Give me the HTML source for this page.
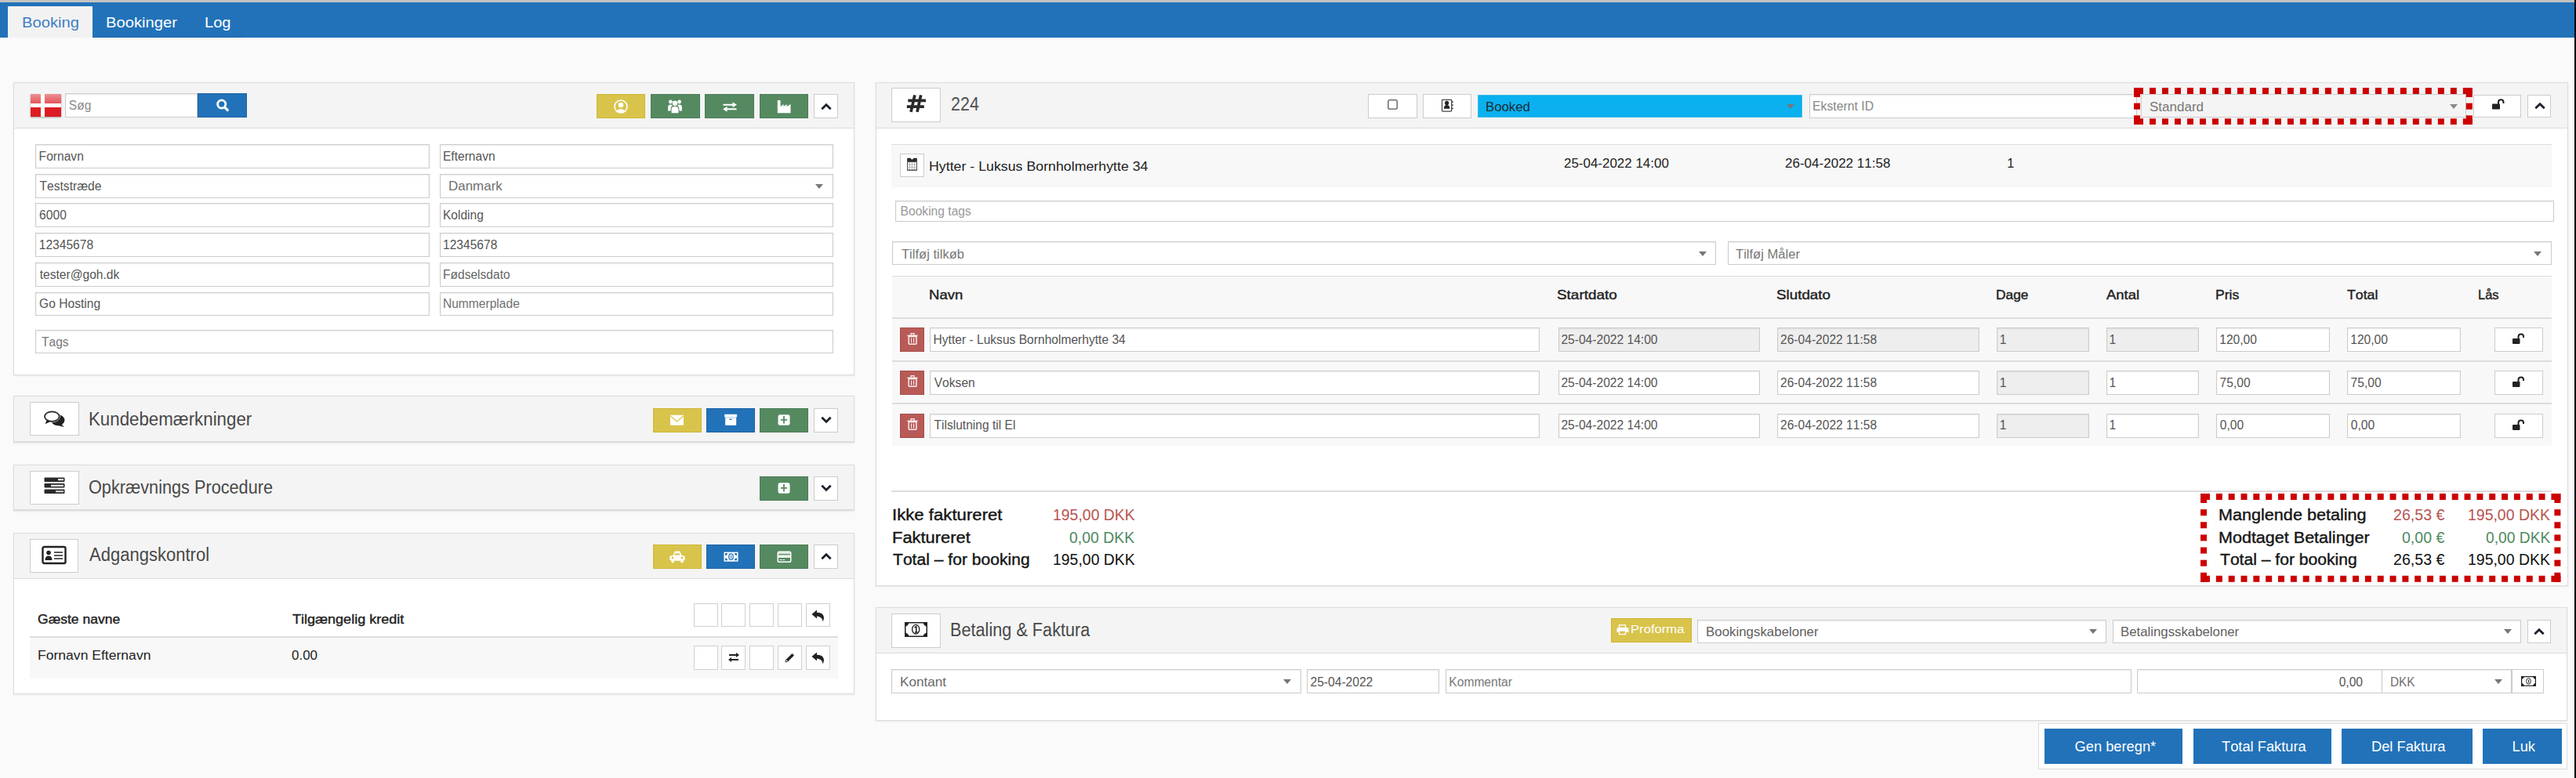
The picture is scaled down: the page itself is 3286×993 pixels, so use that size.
<!DOCTYPE html>
<html><head><meta charset="utf-8"><style>
html,body{margin:0;padding:0;}
body{width:3286px;height:993px;position:relative;overflow:hidden;background:#fafafa;font-family:"Liberation Sans",sans-serif;}
.a{position:absolute;box-sizing:border-box;}
.t{position:absolute;white-space:nowrap;line-height:1;font-kerning:none;}
.flag{background:linear-gradient(to right,transparent 0,transparent 13px,#fff 13px,#fff 18.4px,transparent 18.4px),linear-gradient(to bottom,transparent 0,transparent 11.7px,#fff 11.7px,#fff 17.1px,transparent 17.1px),linear-gradient(to bottom,#ee8f93 0,#e4565b 11.7px,#dc1c22 11.7px,#dc1c22 100%);box-shadow:0 1px 2px rgba(0,0,0,.35);}
</style></head><body>
<div class="a" style="left:0.0px;top:0.0px;width:3286.0px;height:3.0px;background:#c3c3c3;"></div>
<div class="a" style="left:0.0px;top:3.0px;width:3286.0px;height:45.0px;background:#2272b9;"></div>
<div class="a" style="left:10.4px;top:8.0px;width:107.4px;height:40.0px;background:#f2f2f2;"></div>
<div class="a" style="left:117.8px;top:46.8px;width:192.7px;height:1.2px;background:#1e65a8;"></div>
<div class="t" style="left:27.54px;top:21px;font-size:17.50px;color:#3f7dc4;transform:scaleX(1.1536);transform-origin:0 0;">Booking</div>
<div class="t" style="left:134.54px;top:21px;font-size:17.50px;color:#ffffff;transform:scaleX(1.1547);transform-origin:0 0;">Bookinger</div>
<div class="t" style="left:260.66px;top:21px;font-size:17.50px;color:#ffffff;transform:scaleX(1.1451);transform-origin:0 0;">Log</div>
<div class="a" style="left:17.0px;top:104.6px;width:1073.0px;height:374.9px;background:#ffffff;border:1px solid #dcdcdc;box-shadow:0 1px 2px rgba(0,0,0,.08);"></div>
<div class="a" style="left:17.0px;top:104.6px;width:1073.0px;height:59.2px;background:#f4f4f4;border:1px solid #dcdcdc;"></div>
<div class="a flag" style="left:39px;top:120px;width:39px;height:29px"></div>
<div class="a" style="left:82.6px;top:118.8px;width:169.9px;height:30.8px;background:#fff;border:1px solid #cccccc;box-shadow:inset 0 1px 2px rgba(0,0,0,.08);"></div>
<div class="t" style="left:87.79px;top:127px;font-size:15.60px;color:#8a8a8a;">Søg</div>
<div class="a" style="left:252.0px;top:118.8px;width:62.7px;height:30.9px;background:#2272b9;border:1px solid #1d62a3;"></div>
<svg class="a" style="left:274.0px;top:124.0px" width="20" height="20" viewBox="0 0 20 20"><circle cx="8.7" cy="9" r="5.1" fill="none" stroke="#fff" stroke-width="2.8"/><path d="M12.6 12.9 L16.2 16.5" stroke="#fff" stroke-width="3.2" stroke-linecap="round"/></svg>
<div class="a" style="left:761.0px;top:120.0px;width:62.3px;height:31.0px;background:#d9c44b;border:1px solid #cdb535;"></div>
<svg class="a" style="left:782.1px;top:125.5px" width="20" height="20" viewBox="0 0 20 20"><circle cx="10" cy="10" r="8" fill="none" stroke="#fff" stroke-width="1.6"/><circle cx="10" cy="8" r="3.3" fill="#fff"/><path d="M4.5 15.5 Q10 10.5 15.5 15.5 L14 17 Q10 19 6 17 Z" fill="#fff"/></svg>
<div class="a" style="left:830.0px;top:120.0px;width:62.7px;height:31.0px;background:#558a61;border:1px solid #4b7b56;"></div>
<svg class="a" style="left:851.4px;top:125.5px" width="20" height="20" viewBox="0 0 20 20"><circle cx="10" cy="5.8" r="3.2" fill="#fff"/><circle cx="4.4" cy="4" r="2.4" fill="#fff"/><circle cx="15.6" cy="4" r="2.4" fill="#fff"/><path d="M5.6 18.2 L5.6 13.5 Q5.6 9.8 10 9.8 Q14.4 9.8 14.4 13.5 L14.4 18.2 Z" fill="#fff"/><path d="M1.1 15.5 L1.1 11 Q1.1 7.6 4.4 7.6 Q6 7.6 6.8 8.5 Q4.6 10 4.6 13 L4.6 15.5 Z M18.9 15.5 L18.9 11 Q18.9 7.6 15.6 7.6 Q14 7.6 13.2 8.5 Q15.4 10 15.4 13 L15.4 15.5 Z" fill="#fff"/></svg>
<div class="a" style="left:899.3px;top:120.0px;width:62.7px;height:31.0px;background:#558a61;border:1px solid #4b7b56;"></div>
<svg class="a" style="left:920.6px;top:125.5px" width="20" height="20" viewBox="0 0 20 20"><path d="M1.5 7.8 L14.5 7.8 M5.5 13.2 L18.5 13.2" stroke="#fff" stroke-width="2"/><path d="M13.5 4.3 L18.9 7.8 L13.5 11.3 Z M6.5 9.7 L1.1 13.2 L6.5 16.7 Z" fill="#fff"/></svg>
<div class="a" style="left:968.7px;top:120.0px;width:62.3px;height:31.0px;background:#558a61;border:1px solid #4b7b56;"></div>
<svg class="a" style="left:989.9px;top:125.5px" width="20" height="20" viewBox="0 0 20 20"><path d="M1.8 2 L5.6 2 L5.6 10 L9.6 7 L9.6 10 L13.6 7 L13.6 10 L18.5 7 L18.5 18.2 L1.8 18.2 Z" fill="#fff"/></svg>
<div class="a" style="left:1038.0px;top:120.3px;width:30.8px;height:30.7px;background:#fff;border:1px solid #cccccc;"></div>
<svg class="a" style="left:1045.5px;top:128.5px" width="16" height="14" viewBox="0 0 16 14"><path d="M2.3 10.2 L8 4.7 L13.7 10.2" fill="none" stroke="#1c212b" stroke-width="2.8" stroke-linecap="butt" stroke-linejoin="miter"/></svg>
<div class="a" style="left:44.5px;top:184.3px;width:503.2px;height:30.5px;background:#fff;border:1px solid #cccccc;box-shadow:inset 0 1px 2px rgba(0,0,0,.08);"></div>
<div class="a" style="left:561.0px;top:184.3px;width:501.6px;height:30.5px;background:#fff;border:1px solid #cccccc;box-shadow:inset 0 1px 2px rgba(0,0,0,.08);"></div>
<div class="t" style="left:49.62px;top:192px;font-size:15.60px;color:#555;">Fornavn</div>
<div class="t" style="left:564.92px;top:192px;font-size:15.60px;color:#555;">Efternavn</div>
<div class="a" style="left:44.5px;top:222.1px;width:503.2px;height:30.5px;background:#fff;border:1px solid #cccccc;box-shadow:inset 0 1px 2px rgba(0,0,0,.08);"></div>
<div class="a" style="left:561.0px;top:222.1px;width:501.6px;height:30.5px;background:#fff;border:1px solid #cccccc;box-shadow:inset 0 1px 2px rgba(0,0,0,.08);"></div>
<div class="t" style="left:50.55px;top:230px;font-size:15.60px;color:#555;">Teststræde</div>
<div class="t" style="left:571.61px;top:229px;font-size:16.20px;color:#6e6e6e;transform:scaleX(1.0479);transform-origin:0 0;">Danmark</div>
<svg class="a" style="left:1039.0px;top:233.6px" width="12" height="8" viewBox="0 0 12 8"><path d="M1 1 L11 1 L6 7 Z" fill="#777"/></svg>
<div class="a" style="left:44.5px;top:259.3px;width:503.2px;height:30.5px;background:#fff;border:1px solid #cccccc;box-shadow:inset 0 1px 2px rgba(0,0,0,.08);"></div>
<div class="a" style="left:561.0px;top:259.3px;width:501.6px;height:30.5px;background:#fff;border:1px solid #cccccc;box-shadow:inset 0 1px 2px rgba(0,0,0,.08);"></div>
<div class="t" style="left:50.11px;top:267px;font-size:15.60px;color:#555;">6000</div>
<div class="t" style="left:564.92px;top:267px;font-size:15.60px;color:#555;">Kolding</div>
<div class="a" style="left:44.5px;top:297.2px;width:503.2px;height:30.5px;background:#fff;border:1px solid #cccccc;box-shadow:inset 0 1px 2px rgba(0,0,0,.08);"></div>
<div class="a" style="left:561.0px;top:297.2px;width:501.6px;height:30.5px;background:#fff;border:1px solid #cccccc;box-shadow:inset 0 1px 2px rgba(0,0,0,.08);"></div>
<div class="t" style="left:49.71px;top:305px;font-size:15.60px;color:#555;">12345678</div>
<div class="t" style="left:565.01px;top:305px;font-size:15.60px;color:#555;">12345678</div>
<div class="a" style="left:44.5px;top:335.1px;width:503.2px;height:30.5px;background:#fff;border:1px solid #cccccc;box-shadow:inset 0 1px 2px rgba(0,0,0,.08);"></div>
<div class="a" style="left:561.0px;top:335.1px;width:501.6px;height:30.5px;background:#fff;border:1px solid #cccccc;box-shadow:inset 0 1px 2px rgba(0,0,0,.08);"></div>
<div class="t" style="left:50.66px;top:343px;font-size:15.60px;color:#555;">tester@goh.dk</div>
<div class="t" style="left:564.92px;top:343px;font-size:15.60px;color:#666;">Fødselsdato</div>
<div class="a" style="left:44.5px;top:372.8px;width:503.2px;height:30.5px;background:#fff;border:1px solid #cccccc;box-shadow:inset 0 1px 2px rgba(0,0,0,.08);"></div>
<div class="a" style="left:561.0px;top:372.8px;width:501.6px;height:30.5px;background:#fff;border:1px solid #cccccc;box-shadow:inset 0 1px 2px rgba(0,0,0,.08);"></div>
<div class="t" style="left:50.12px;top:380px;font-size:15.60px;color:#555;">Go Hosting</div>
<div class="t" style="left:564.92px;top:380px;font-size:15.60px;color:#707070;">Nummerplade</div>
<div class="a" style="left:44.7px;top:421.2px;width:1017.9px;height:30.2px;background:#fff;border:1px solid #cccccc;box-shadow:inset 0 1px 2px rgba(0,0,0,.08);"></div>
<div class="t" style="left:52.95px;top:429px;font-size:15.60px;color:#777;">Tags</div>
<div class="a" style="left:17.0px;top:505.2px;width:1073.0px;height:59.8px;background:#f4f4f4;border:1px solid #dcdcdc;border-bottom-width:2px;box-shadow:0 1px 2px rgba(0,0,0,.08);"></div>
<div class="a" style="left:38.2px;top:512.7px;width:62.4px;height:43.2px;background:#fff;border:1px solid #cccccc;"></div>
<div class="t" style="left:112.67px;top:524px;font-size:23.00px;color:#484848;transform:scaleX(0.9693);transform-origin:0 0;">Kundebemærkninger</div>
<div class="a" style="left:832.8px;top:520.8px;width:62.6px;height:30.9px;background:#d9c44b;border:1px solid #cdb535;"></div>
<svg class="a" style="left:854.1px;top:526.2px" width="20" height="20" viewBox="0 0 20 20"><rect x="1" y="3.75" width="17" height="13.1" rx="1" fill="#fff"/><path d="M1.5 5 L9.5 12 L17.5 5" fill="none" stroke="#d9c44b" stroke-width="1.2"/></svg>
<div class="a" style="left:900.5px;top:520.8px;width:62.7px;height:30.9px;background:#2272b9;border:1px solid #1d62a3;"></div>
<svg class="a" style="left:921.9px;top:526.2px" width="20" height="20" viewBox="0 0 20 20"><rect x="2.15" y="2.75" width="16" height="3.9" rx="0.8" fill="#fff"/><rect x="3.15" y="7.15" width="14" height="9.7" fill="#fff"/><rect x="8.4" y="8.6" width="3.2" height="1.4" fill="#2272b9"/></svg>
<div class="a" style="left:968.6px;top:520.8px;width:62.7px;height:30.9px;background:#558a61;border:1px solid #4b7b56;"></div>
<svg class="a" style="left:990.0px;top:526.2px" width="20" height="20" viewBox="0 0 20 20"><rect x="2.55" y="3.25" width="15" height="13.6" rx="2.5" fill="#fff"/><path d="M10 5.1 L10 14.4 M5.9 9.9 L14.1 9.9" stroke="#558a61" stroke-width="1.8"/></svg>
<div class="a" style="left:1038.0px;top:520.8px;width:30.9px;height:30.9px;background:#fff;border:1px solid #cccccc;"></div>
<svg class="a" style="left:1045.5px;top:529.0px" width="16" height="14" viewBox="0 0 16 14"><path d="M2.3 3.8 L8 9.3 L13.7 3.8" fill="none" stroke="#1c212b" stroke-width="2.8" stroke-linecap="butt" stroke-linejoin="miter"/></svg>
<svg class="a" style="left:50.0px;top:520.0px" width="36" height="28" viewBox="0 0 36 28"><ellipse cx="23.8" cy="16.2" rx="8.6" ry="7" fill="#222"/><path d="M27 20 L31.8 25 L21.5 22.5 Z" fill="#222"/><ellipse cx="16.3" cy="11.6" rx="10.6" ry="7.6" fill="#fff"/><ellipse cx="16.3" cy="11.6" rx="9.3" ry="6.3" fill="#fff" stroke="#222" stroke-width="1.7"/><path d="M9.5 16.6 L7.6 21.2 L14.5 17.9 Z" fill="#222"/></svg>
<div class="a" style="left:17.0px;top:593.0px;width:1073.0px;height:59.0px;background:#f4f4f4;border:1px solid #dcdcdc;border-bottom-width:2px;box-shadow:0 1px 2px rgba(0,0,0,.08);"></div>
<div class="a" style="left:38.2px;top:600.5px;width:62.4px;height:43.2px;background:#fff;border:1px solid #cccccc;"></div>
<div class="t" style="left:113.47px;top:611px;font-size:23.00px;color:#484848;transform:scaleX(0.9427);transform-origin:0 0;">Opkrævnings Procedure</div>
<div class="a" style="left:968.6px;top:607.9px;width:62.7px;height:30.8px;background:#558a61;border:1px solid #4b7b56;"></div>
<svg class="a" style="left:990.0px;top:613.3px" width="20" height="20" viewBox="0 0 20 20"><rect x="2.55" y="3.25" width="15" height="13.6" rx="2.5" fill="#fff"/><path d="M10 5.1 L10 14.4 M5.9 9.9 L14.1 9.9" stroke="#558a61" stroke-width="1.8"/></svg>
<div class="a" style="left:1038.0px;top:607.9px;width:30.9px;height:30.8px;background:#fff;border:1px solid #cccccc;"></div>
<svg class="a" style="left:1045.5px;top:616.1px" width="16" height="14" viewBox="0 0 16 14"><path d="M2.3 3.8 L8 9.3 L13.7 3.8" fill="none" stroke="#1c212b" stroke-width="2.8" stroke-linecap="butt" stroke-linejoin="miter"/></svg>
<svg class="a" style="left:56.0px;top:609.0px" width="27" height="22" viewBox="0 0 27 22"><rect x="0.5" y="0.5" width="26" height="5.5" rx="1" fill="#2a2a2a"/><rect x="0.5" y="8" width="26" height="5.5" rx="1" fill="#2a2a2a"/><rect x="0.5" y="15.5" width="26" height="5.5" rx="1" fill="#2a2a2a"/><rect x="18" y="2.2" width="7" height="2" fill="#fff"/><rect x="9" y="9.8" width="16" height="2" fill="#fff"/><rect x="15" y="17.3" width="10" height="2" fill="#ddd"/></svg>
<div class="a" style="left:17.0px;top:680.3px;width:1073.0px;height:205.7px;background:#fff;border:1px solid #dcdcdc;box-shadow:0 1px 2px rgba(0,0,0,.08);"></div>
<div class="a" style="left:17.0px;top:680.3px;width:1073.0px;height:58.7px;background:#f4f4f4;border:1px solid #dcdcdc;"></div>
<div class="a" style="left:38.1px;top:687.8px;width:62.4px;height:43.4px;background:#fff;border:1px solid #cccccc;"></div>
<div class="t" style="left:114.16px;top:697px;font-size:23.00px;color:#484848;transform:scaleX(0.9574);transform-origin:0 0;">Adgangskontrol</div>
<svg class="a" style="left:53.0px;top:696.0px" width="33" height="26" viewBox="0 0 33 26"><rect x="1.5" y="2" width="29" height="21" rx="2" fill="none" stroke="#222" stroke-width="2.4"/><circle cx="9" cy="9.5" r="2.8" fill="#222"/><path d="M4.5 19 Q4.5 13.5 9 13.5 Q13.5 13.5 13.5 19 Z" fill="#222"/><path d="M16 9 L27 9 M16 13 L27 13 M16 17 L27 17" stroke="#222" stroke-width="1.6"/></svg>
<div class="a" style="left:832.8px;top:695.0px;width:62.6px;height:31.0px;background:#d9c44b;border:1px solid #cdb535;"></div>
<svg class="a" style="left:853.5px;top:703.0px" width="20" height="16" viewBox="0 0 20 16"><path d="M4.3 6.2 L6.2 1.8 Q6.8 0.6 8 0.6 L12 0.6 Q13.2 0.6 13.8 1.8 L15.7 6.2 Z" fill="#fff"/><rect x="0.3" y="6" width="19.4" height="6.8" rx="2.5" fill="#fff"/><rect x="6.5" y="3.4" width="6.6" height="2.1" fill="#d9c44b"/><circle cx="4" cy="9" r="1.4" fill="#d9c44b"/><circle cx="16" cy="9" r="1.4" fill="#d9c44b"/><rect x="2.5" y="12" width="3.2" height="3.3" rx="1" fill="#fff"/><rect x="14.3" y="12" width="3.2" height="3.3" rx="1" fill="#fff"/></svg>
<div class="a" style="left:900.5px;top:695.0px;width:62.7px;height:31.0px;background:#2272b9;border:1px solid #1d62a3;"></div>
<svg class="a" style="left:922.5px;top:703.5px" width="19" height="14" viewBox="0 0 19 14"><rect x="0.5" y="0.6" width="18" height="12.1" fill="#fff"/><path d="M2 2.1 L5 2.1 A3 3 0 0 1 2 5.1 Z M17 2.1 L14 2.1 A3 3 0 0 0 17 5.1 Z M2 11.2 L5 11.2 A3 3 0 0 0 2 8.2 Z M17 11.2 L14 11.2 A3 3 0 0 1 17 8.2 Z" fill="#2272b9"/><ellipse cx="9.5" cy="6.65" rx="2.7" ry="3.7" fill="none" stroke="#2272b9" stroke-width="1.3"/><path d="M9.6 4.8 L9.6 8.6" stroke="#2272b9" stroke-width="1"/></svg>
<div class="a" style="left:968.6px;top:695.0px;width:62.7px;height:31.0px;background:#558a61;border:1px solid #4b7b56;"></div>
<svg class="a" style="left:990.5px;top:702.5px" width="19" height="16" viewBox="0 0 19 16"><rect x="1.25" y="1.25" width="16.5" height="13.1" rx="1.8" fill="none" stroke="#fff" stroke-width="1.5"/><rect x="2" y="2" width="15" height="2.2" fill="#d6e2d6"/><rect x="1.25" y="5.5" width="16.5" height="3.3" fill="#fff"/><rect x="3.5" y="11" width="3" height="1" fill="#fff"/><rect x="7.5" y="11" width="2.5" height="1" fill="#fff"/></svg>
<div class="a" style="left:1038.0px;top:695.0px;width:30.9px;height:31.0px;background:#fff;border:1px solid #cccccc;"></div>
<svg class="a" style="left:1045.5px;top:703.3px" width="16" height="14" viewBox="0 0 16 14"><path d="M2.3 10.2 L8 4.7 L13.7 10.2" fill="none" stroke="#1c212b" stroke-width="2.8" stroke-linecap="butt" stroke-linejoin="miter"/></svg>
<div class="t" style="left:48.32px;top:782px;font-size:17.00px;color:#222;-webkit-text-stroke:0.4px #222;transform:scaleX(1.0314);transform-origin:0 0;">Gæste navne</div>
<div class="t" style="left:372.60px;top:782px;font-size:17.00px;color:#222;-webkit-text-stroke:0.4px #222;transform:scaleX(1.0601);transform-origin:0 0;">Tilgængelig kredit</div>
<div class="a" style="left:885.3px;top:769.7px;width:31.0px;height:30.8px;background:#fff;border:1px solid #d0d0d0;"></div>
<div class="a" style="left:920.4px;top:769.7px;width:31.0px;height:30.8px;background:#fff;border:1px solid #d0d0d0;"></div>
<div class="a" style="left:955.8px;top:769.7px;width:31.0px;height:30.8px;background:#fff;border:1px solid #d0d0d0;"></div>
<div class="a" style="left:992.4px;top:769.7px;width:31.0px;height:30.8px;background:#fff;border:1px solid #d0d0d0;"></div>
<div class="a" style="left:1027.7px;top:769.7px;width:31.0px;height:30.8px;background:#fff;border:1px solid #d0d0d0;"></div>
<div class="a" style="left:37.8px;top:811.5px;width:1031.2px;height:2.0px;background:#dddddd;"></div>
<div class="a" style="left:37.8px;top:813.5px;width:1031.2px;height:52.0px;background:#f8f8f8;"></div>
<div class="t" style="left:47.76px;top:829px;font-size:16.80px;color:#222;transform:scaleX(1.0461);transform-origin:0 0;">Fornavn Efternavn</div>
<div class="t" style="left:372.34px;top:829px;font-size:16.80px;color:#222;transform:scaleX(1.0100);transform-origin:0 0;">0.00</div>
<div class="a" style="left:885.3px;top:824.2px;width:31.0px;height:30.8px;background:#fff;border:1px solid #d0d0d0;"></div>
<div class="a" style="left:920.4px;top:824.2px;width:31.0px;height:30.8px;background:#fff;border:1px solid #d0d0d0;"></div>
<div class="a" style="left:955.8px;top:824.2px;width:31.0px;height:30.8px;background:#fff;border:1px solid #d0d0d0;"></div>
<div class="a" style="left:992.4px;top:824.2px;width:31.0px;height:30.8px;background:#fff;border:1px solid #d0d0d0;"></div>
<div class="a" style="left:1027.7px;top:824.2px;width:31.0px;height:30.8px;background:#fff;border:1px solid #d0d0d0;"></div>
<svg class="a" style="left:1034.0px;top:777.0px" width="18" height="18" viewBox="0 0 18 18"><path d="M1.5 7 L8 1.5 L8 4.8 Q16 4.5 17 11 Q17 14 15.5 16.5 Q15 10 8 9.5 L8 12.5 Z" fill="#222"/></svg>
<svg class="a" style="left:1034.0px;top:831.0px" width="18" height="18" viewBox="0 0 18 18"><path d="M1.5 7 L8 1.5 L8 4.8 Q16 4.5 17 11 Q17 14 15.5 16.5 Q15 10 8 9.5 L8 12.5 Z" fill="#222"/></svg>
<svg class="a" style="left:928.0px;top:831.0px" width="16" height="16" viewBox="0 0 16 16"><path d="M2 5 L13 5 M3 11 L14 11" stroke="#222" stroke-width="1.8"/><path d="M11 2 L15 5 L11 8 Z M5 8 L1 11 L5 14 Z" fill="#222"/></svg>
<svg class="a" style="left:999.0px;top:832.0px" width="16" height="16" viewBox="0 0 16 16"><path d="M3 13 L4 9.5 L11.5 2 L14 4.5 L6.5 12 Z" fill="#222"/><path d="M3 13 L4 9.5 L6.5 12 Z" fill="#fff" stroke="#222" stroke-width="0.8"/></svg>
<div class="a" style="left:1117.0px;top:104.7px;width:2158.5px;height:643.5px;background:#fff;border:1px solid #dcdcdc;box-shadow:0 1px 2px rgba(0,0,0,.08);"></div>
<div class="a" style="left:1117.0px;top:104.7px;width:2158.5px;height:59.1px;background:#f4f4f4;border:1px solid #dcdcdc;"></div>
<div class="a" style="left:1137.3px;top:112.4px;width:62.4px;height:43.5px;background:#fff;border:1px solid #cccccc;"></div>
<svg class="a" style="left:1155.0px;top:120.0px" width="28" height="25" viewBox="0 0 28 25"><path d="M11.9 1.3 L7 22.9 M19.7 1.3 L15 22.9 M3.3 8.3 L26.1 8.3 M1.8 16.2 L23.8 16.2" stroke="#2a2a2a" stroke-width="3.7"/></svg>
<div class="t" style="left:1212.92px;top:122px;font-size:23.00px;color:#505050;transform:scaleX(0.9359);transform-origin:0 0;">224</div>
<div class="a" style="left:1745.4px;top:120.3px;width:62.2px;height:30.3px;background:#fff;border:1px solid #cccccc;"></div>
<svg class="a" style="left:1769.0px;top:126.0px" width="15" height="15" viewBox="0 0 15 15"><rect x="1.8" y="1.7" width="11.4" height="11.5" rx="1.8" fill="none" stroke="#555" stroke-width="1.3"/></svg>
<div class="a" style="left:1814.6px;top:120.3px;width:62.0px;height:30.3px;background:#fff;border:1px solid #cccccc;"></div>
<svg class="a" style="left:1837.5px;top:125.5px" width="17" height="17" viewBox="0 0 17 17"><rect x="1.5" y="1.3" width="12.2" height="14.8" rx="0.8" fill="none" stroke="#444" stroke-width="1.2"/><circle cx="7.6" cy="5.4" r="2.6" fill="#222"/><path d="M3.8 12.7 Q3.8 7.9 7.6 7.9 Q11.4 7.9 11.4 12.7 Z" fill="#222"/><rect x="14" y="3.2" width="1.6" height="1.6" fill="#333"/><rect x="14" y="7.4" width="1.6" height="1.6" fill="#333"/><rect x="14" y="11.6" width="1.6" height="1.6" fill="#333"/></svg>
<div class="a" style="left:1884.5px;top:121.0px;width:414.9px;height:29.1px;background:#0ab1ee;border:1px solid #3fb9e8;"></div>
<div class="t" style="left:1895.42px;top:128px;font-size:16.50px;color:#1b2b33;transform:scaleX(1.0160);transform-origin:0 0;">Booked</div>
<svg class="a" style="left:2277.5px;top:132.0px" width="12" height="8" viewBox="0 0 12 8"><path d="M1 1 L11 1 L6 7 Z" fill="#777"/></svg>
<div class="a" style="left:2307.5px;top:119.6px;width:418.5px;height:31.0px;background:#fff;border:1px solid #cccccc;box-shadow:inset 0 1px 2px rgba(0,0,0,.08);"></div>
<div class="t" style="left:2312.00px;top:127px;font-size:16.40px;color:#888;transform:scaleX(0.9635);transform-origin:0 0;">Eksternt ID</div>
<div class="a" style="left:2731.4px;top:120.3px;width:414.9px;height:30.0px;background:#f4f4f4;border:1px solid #cccccc;"></div>
<div class="t" style="left:2742.43px;top:129px;font-size:16.80px;color:#777;transform:scaleX(1.0130);transform-origin:0 0;">Standard</div>
<svg class="a" style="left:3124.0px;top:132.0px" width="12" height="8" viewBox="0 0 12 8"><path d="M1 1 L11 1 L6 7 Z" fill="#888"/></svg>
<div class="a" style="left:3155.0px;top:120.7px;width:61.4px;height:29.6px;background:#fff;border:1px solid #cccccc;"></div>
<svg class="a" style="left:3178.0px;top:126.0px" width="17" height="15" viewBox="0 0 17 15"><rect x="1" y="6.5" width="10" height="7" rx="0.8" fill="#222"/><path d="M9 7 L9 4.5 Q9 1.3 12.3 1.3 Q15.5 1.3 15.5 4.5 L15.5 6" fill="none" stroke="#222" stroke-width="2"/></svg>
<div class="a" style="left:3224.3px;top:120.7px;width:30.1px;height:29.6px;background:#fff;border:1px solid #cccccc;"></div>
<svg class="a" style="left:3231.5px;top:128.3px" width="16" height="14" viewBox="0 0 16 14"><path d="M2.3 10.2 L8 4.7 L13.7 10.2" fill="none" stroke="#1c212b" stroke-width="2.8" stroke-linecap="butt" stroke-linejoin="miter"/></svg>
<svg class="a" style="left:2722.00px;top:112.10px" width="431.80" height="47.30" fill="#cc0000"><rect x="0.00" y="0.00" width="12.00" height="8.00"/><rect x="0.00" y="0.00" width="8.00" height="12.00"/><rect x="419.80" y="0.00" width="12.00" height="8.00"/><rect x="423.80" y="0.00" width="8.00" height="12.00"/><rect x="0.00" y="39.30" width="12.00" height="8.00"/><rect x="0.00" y="35.30" width="8.00" height="12.00"/><rect x="419.80" y="39.30" width="12.00" height="8.00"/><rect x="423.80" y="35.30" width="8.00" height="12.00"/><rect x="19.99" y="0.00" width="8.00" height="8.00"/><rect x="19.99" y="39.30" width="8.00" height="8.00"/><rect x="35.98" y="0.00" width="8.00" height="8.00"/><rect x="35.98" y="39.30" width="8.00" height="8.00"/><rect x="51.98" y="0.00" width="8.00" height="8.00"/><rect x="51.98" y="39.30" width="8.00" height="8.00"/><rect x="67.97" y="0.00" width="8.00" height="8.00"/><rect x="67.97" y="39.30" width="8.00" height="8.00"/><rect x="83.96" y="0.00" width="8.00" height="8.00"/><rect x="83.96" y="39.30" width="8.00" height="8.00"/><rect x="99.95" y="0.00" width="8.00" height="8.00"/><rect x="99.95" y="39.30" width="8.00" height="8.00"/><rect x="115.95" y="0.00" width="8.00" height="8.00"/><rect x="115.95" y="39.30" width="8.00" height="8.00"/><rect x="131.94" y="0.00" width="8.00" height="8.00"/><rect x="131.94" y="39.30" width="8.00" height="8.00"/><rect x="147.93" y="0.00" width="8.00" height="8.00"/><rect x="147.93" y="39.30" width="8.00" height="8.00"/><rect x="163.92" y="0.00" width="8.00" height="8.00"/><rect x="163.92" y="39.30" width="8.00" height="8.00"/><rect x="179.92" y="0.00" width="8.00" height="8.00"/><rect x="179.92" y="39.30" width="8.00" height="8.00"/><rect x="195.91" y="0.00" width="8.00" height="8.00"/><rect x="195.91" y="39.30" width="8.00" height="8.00"/><rect x="211.90" y="0.00" width="8.00" height="8.00"/><rect x="211.90" y="39.30" width="8.00" height="8.00"/><rect x="227.89" y="0.00" width="8.00" height="8.00"/><rect x="227.89" y="39.30" width="8.00" height="8.00"/><rect x="243.88" y="0.00" width="8.00" height="8.00"/><rect x="243.88" y="39.30" width="8.00" height="8.00"/><rect x="259.88" y="0.00" width="8.00" height="8.00"/><rect x="259.88" y="39.30" width="8.00" height="8.00"/><rect x="275.87" y="0.00" width="8.00" height="8.00"/><rect x="275.87" y="39.30" width="8.00" height="8.00"/><rect x="291.86" y="0.00" width="8.00" height="8.00"/><rect x="291.86" y="39.30" width="8.00" height="8.00"/><rect x="307.85" y="0.00" width="8.00" height="8.00"/><rect x="307.85" y="39.30" width="8.00" height="8.00"/><rect x="323.85" y="0.00" width="8.00" height="8.00"/><rect x="323.85" y="39.30" width="8.00" height="8.00"/><rect x="339.84" y="0.00" width="8.00" height="8.00"/><rect x="339.84" y="39.30" width="8.00" height="8.00"/><rect x="355.83" y="0.00" width="8.00" height="8.00"/><rect x="355.83" y="39.30" width="8.00" height="8.00"/><rect x="371.82" y="0.00" width="8.00" height="8.00"/><rect x="371.82" y="39.30" width="8.00" height="8.00"/><rect x="387.82" y="0.00" width="8.00" height="8.00"/><rect x="387.82" y="39.30" width="8.00" height="8.00"/><rect x="403.81" y="0.00" width="8.00" height="8.00"/><rect x="403.81" y="39.30" width="8.00" height="8.00"/><rect x="0.00" y="19.65" width="8.00" height="8.00"/><rect x="423.80" y="19.65" width="8.00" height="8.00"/></svg>
<div class="a" style="left:1137.3px;top:184.3px;width:2117.7px;height:55.2px;background:#f8f8f8;border-top:1px solid #dddddd;"></div>
<div class="a" style="left:1148.0px;top:196.0px;width:30.7px;height:30.4px;background:#fff;border:1px solid #cccccc;"></div>
<svg class="a" style="left:1156.0px;top:201.0px" width="15" height="18" viewBox="0 0 15 18"><path d="M1.2 0.8 L6 0.8 L6 2.2 L9 2.2 L9 0.8 L13.8 0.8 L13.8 5.6 L1.2 5.6 Z" fill="#2a2a2a"/><rect x="1.6" y="5.6" width="11.8" height="10.6" fill="#fff" stroke="#333" stroke-width="0.9"/><path d="M1.6 9.2 L13.4 9.2 M1.6 12.4 L13.4 12.4 M4.5 5.6 L4.5 16.2 M7.5 5.6 L7.5 16.2 M10.5 5.6 L10.5 16.2" stroke="#aaa" stroke-width="0.8"/><path d="M1.2 16.2 L13.8 16.2" stroke="#555" stroke-width="1.2"/></svg>
<div class="t" style="left:1185.14px;top:204px;font-size:17.00px;color:#222;transform:scaleX(1.0452);transform-origin:0 0;">Hytter - Luksus Bornholmerhytte 34</div>
<div class="t" style="left:1994.95px;top:200px;font-size:16.40px;color:#222;transform:scaleX(1.0342);transform-origin:0 0;">25-04-2022 14:00</div>
<div class="t" style="left:2277.04px;top:200px;font-size:16.40px;color:#222;transform:scaleX(1.0387);transform-origin:0 0;">26-04-2022 11:58</div>
<div class="t" style="left:2560.15px;top:200px;font-size:16.40px;color:#222;">1</div>
<div class="a" style="left:1141.6px;top:256.0px;width:2116.4px;height:27.3px;background:#fff;border:1px solid #cccccc;box-shadow:inset 0 1px 2px rgba(0,0,0,.08);"></div>
<div class="t" style="left:1148.62px;top:262px;font-size:15.60px;color:#999;">Booking tags</div>
<div class="a" style="left:1137.6px;top:307.8px;width:1051.6px;height:30.7px;background:#fff;border:1px solid #cccccc;box-shadow:inset 0 1px 2px rgba(0,0,0,.08);"></div>
<div class="t" style="left:1149.53px;top:317px;font-size:15.60px;color:#777;transform:scaleX(1.0620);transform-origin:0 0;">Tilføj tilkøb</div>
<svg class="a" style="left:2166.0px;top:319.5px" width="12" height="8" viewBox="0 0 12 8"><path d="M1 1 L11 1 L6 7 Z" fill="#777"/></svg>
<div class="a" style="left:2203.5px;top:307.8px;width:1051.2px;height:30.7px;background:#fff;border:1px solid #cccccc;box-shadow:inset 0 1px 2px rgba(0,0,0,.08);"></div>
<div class="t" style="left:2214.33px;top:317px;font-size:16.00px;color:#777;transform:scaleX(1.0371);transform-origin:0 0;">Tilføj Måler</div>
<svg class="a" style="left:3231.4px;top:319.5px" width="12" height="8" viewBox="0 0 12 8"><path d="M1 1 L11 1 L6 7 Z" fill="#777"/></svg>
<div class="a" style="left:1137.6px;top:352.3px;width:2117.1px;height:54.7px;background:#f8f8f8;border-top:1px solid #dddddd;border-bottom:2px solid #dddddd;"></div>
<div class="t" style="left:1185.08px;top:369px;font-size:16.60px;color:#222;-webkit-text-stroke:0.4px #222;transform:scaleX(1.1181);transform-origin:0 0;">Navn</div>
<div class="t" style="left:1986.34px;top:369px;font-size:16.60px;color:#222;-webkit-text-stroke:0.4px #222;transform:scaleX(1.1394);transform-origin:0 0;">Startdato</div>
<div class="t" style="left:2265.95px;top:369px;font-size:16.60px;color:#222;-webkit-text-stroke:0.4px #222;transform:scaleX(1.1335);transform-origin:0 0;">Slutdato</div>
<div class="t" style="left:2545.68px;top:369px;font-size:16.60px;color:#222;-webkit-text-stroke:0.4px #222;transform:scaleX(1.0456);transform-origin:0 0;">Dage</div>
<div class="t" style="left:2687.06px;top:369px;font-size:16.60px;color:#222;-webkit-text-stroke:0.4px #222;transform:scaleX(1.1119);transform-origin:0 0;">Antal</div>
<div class="t" style="left:2825.56px;top:369px;font-size:16.60px;color:#222;-webkit-text-stroke:0.4px #222;transform:scaleX(1.0591);transform-origin:0 0;">Pris</div>
<div class="t" style="left:2994.40px;top:369px;font-size:16.60px;color:#222;-webkit-text-stroke:0.4px #222;transform:scaleX(1.0672);transform-origin:0 0;">Total</div>
<div class="t" style="left:3161.25px;top:369px;font-size:16.60px;color:#222;-webkit-text-stroke:0.4px #222;transform:scaleX(0.9918);transform-origin:0 0;">Lås</div>
<div class="a" style="left:1137.6px;top:407.0px;width:2117.1px;height:52.8px;background:#f8f8f8;"></div>
<div class="a" style="left:1137.6px;top:459.8px;width:2117.1px;height:2.0px;background:#dddddd;"></div>
<div class="a" style="left:1148.0px;top:418.0px;width:30.9px;height:31.0px;background:#b85b57;border:1px solid #a84e4a;"></div>
<svg class="a" style="left:1153.5px;top:423.5px" width="20" height="20" viewBox="0 0 20 20"><rect x="5.2" y="5.6" width="9.8" height="9.6" rx="1" fill="none" stroke="#fbeeee" stroke-width="1.5"/><rect x="3.5" y="3.6" width="13" height="1.8" fill="#fbeeee"/><path d="M8.1 3.8 L8.1 1.6 L12 1.6 L12 3.8" stroke="#fbeeee" stroke-width="1.3" fill="none"/><path d="M8.6 7.6 L8.6 13.4 M11.6 7.6 L11.6 13.4" stroke="#fbeeee" stroke-width="1.1"/></svg>
<div class="a" style="left:1186.2px;top:418.0px;width:778.2px;height:31.0px;background:#fff;border:1px solid #cccccc;box-shadow:inset 0 1px 2px rgba(0,0,0,.08);"></div>
<div class="t" style="left:1190.52px;top:426px;font-size:15.60px;color:#555;">Hytter - Luksus Bornholmerhytte 34</div>
<div class="a" style="left:1987.5px;top:418.0px;width:257.7px;height:31.0px;background:#eeeeee;border:1px solid #cccccc;box-shadow:inset 0 1px 2px rgba(0,0,0,.08);"></div>
<div class="t" style="left:1991.42px;top:426px;font-size:15.60px;color:#555;">25-04-2022 14:00</div>
<div class="a" style="left:2267.1px;top:418.0px;width:257.7px;height:31.0px;background:#eeeeee;border:1px solid #cccccc;box-shadow:inset 0 1px 2px rgba(0,0,0,.08);"></div>
<div class="t" style="left:2271.02px;top:426px;font-size:15.60px;color:#555;">26-04-2022 11:58</div>
<div class="a" style="left:2547.0px;top:418.0px;width:118.1px;height:31.0px;background:#eeeeee;border:1px solid #cccccc;box-shadow:inset 0 1px 2px rgba(0,0,0,.08);"></div>
<div class="t" style="left:2550.71px;top:426px;font-size:15.60px;color:#555;">1</div>
<div class="a" style="left:2686.7px;top:418.0px;width:118.0px;height:31.0px;background:#eeeeee;border:1px solid #cccccc;box-shadow:inset 0 1px 2px rgba(0,0,0,.08);"></div>
<div class="t" style="left:2690.41px;top:426px;font-size:15.60px;color:#555;">1</div>
<div class="a" style="left:2826.6px;top:418.0px;width:145.4px;height:31.0px;background:#fff;border:1px solid #cccccc;box-shadow:inset 0 1px 2px rgba(0,0,0,.08);"></div>
<div class="t" style="left:2831.21px;top:426px;font-size:15.60px;color:#555;">120,00</div>
<div class="a" style="left:2994.0px;top:418.0px;width:145.4px;height:31.0px;background:#fff;border:1px solid #cccccc;box-shadow:inset 0 1px 2px rgba(0,0,0,.08);"></div>
<div class="t" style="left:2998.21px;top:426px;font-size:15.60px;color:#555;">120,00</div>
<div class="a" style="left:3181.8px;top:418.0px;width:62.5px;height:31.0px;background:#fff;border:1px solid #cccccc;"></div>
<svg class="a" style="left:3204.0px;top:425.0px" width="17" height="15" viewBox="0 0 17 15"><rect x="1" y="7" width="9.5" height="7" rx="1" fill="#222"/><path d="M8.5 7.5 L8.5 4.5 Q8.5 1.5 12 1.5 Q15 1.5 15 4.5 L15 6" fill="none" stroke="#222" stroke-width="2"/></svg>
<div class="a" style="left:1137.6px;top:461.8px;width:2117.1px;height:52.4px;background:#f8f8f8;"></div>
<div class="a" style="left:1137.6px;top:514.2px;width:2117.1px;height:2.0px;background:#dddddd;"></div>
<div class="a" style="left:1148.0px;top:472.8px;width:30.9px;height:31.0px;background:#b85b57;border:1px solid #a84e4a;"></div>
<svg class="a" style="left:1153.5px;top:478.3px" width="20" height="20" viewBox="0 0 20 20"><rect x="5.2" y="5.6" width="9.8" height="9.6" rx="1" fill="none" stroke="#fbeeee" stroke-width="1.5"/><rect x="3.5" y="3.6" width="13" height="1.8" fill="#fbeeee"/><path d="M8.1 3.8 L8.1 1.6 L12 1.6 L12 3.8" stroke="#fbeeee" stroke-width="1.3" fill="none"/><path d="M8.6 7.6 L8.6 13.4 M11.6 7.6 L11.6 13.4" stroke="#fbeeee" stroke-width="1.1"/></svg>
<div class="a" style="left:1186.2px;top:472.8px;width:778.2px;height:31.0px;background:#fff;border:1px solid #cccccc;box-shadow:inset 0 1px 2px rgba(0,0,0,.08);"></div>
<div class="t" style="left:1191.73px;top:481px;font-size:15.60px;color:#555;">Voksen</div>
<div class="a" style="left:1987.5px;top:472.8px;width:257.7px;height:31.0px;background:#fff;border:1px solid #cccccc;box-shadow:inset 0 1px 2px rgba(0,0,0,.08);"></div>
<div class="t" style="left:1991.42px;top:481px;font-size:15.60px;color:#555;">25-04-2022 14:00</div>
<div class="a" style="left:2267.1px;top:472.8px;width:257.7px;height:31.0px;background:#fff;border:1px solid #cccccc;box-shadow:inset 0 1px 2px rgba(0,0,0,.08);"></div>
<div class="t" style="left:2271.02px;top:481px;font-size:15.60px;color:#555;">26-04-2022 11:58</div>
<div class="a" style="left:2547.0px;top:472.8px;width:118.1px;height:31.0px;background:#eeeeee;border:1px solid #cccccc;box-shadow:inset 0 1px 2px rgba(0,0,0,.08);"></div>
<div class="t" style="left:2550.71px;top:481px;font-size:15.60px;color:#555;">1</div>
<div class="a" style="left:2686.7px;top:472.8px;width:118.0px;height:31.0px;background:#fff;border:1px solid #cccccc;box-shadow:inset 0 1px 2px rgba(0,0,0,.08);"></div>
<div class="t" style="left:2690.41px;top:481px;font-size:15.60px;color:#555;">1</div>
<div class="a" style="left:2826.6px;top:472.8px;width:145.4px;height:31.0px;background:#fff;border:1px solid #cccccc;box-shadow:inset 0 1px 2px rgba(0,0,0,.08);"></div>
<div class="t" style="left:2831.60px;top:481px;font-size:15.60px;color:#555;">75,00</div>
<div class="a" style="left:2994.0px;top:472.8px;width:145.4px;height:31.0px;background:#fff;border:1px solid #cccccc;box-shadow:inset 0 1px 2px rgba(0,0,0,.08);"></div>
<div class="t" style="left:2998.60px;top:481px;font-size:15.60px;color:#555;">75,00</div>
<div class="a" style="left:3181.8px;top:472.8px;width:62.5px;height:31.0px;background:#fff;border:1px solid #cccccc;"></div>
<svg class="a" style="left:3204.0px;top:479.8px" width="17" height="15" viewBox="0 0 17 15"><rect x="1" y="7" width="9.5" height="7" rx="1" fill="#222"/><path d="M8.5 7.5 L8.5 4.5 Q8.5 1.5 12 1.5 Q15 1.5 15 4.5 L15 6" fill="none" stroke="#222" stroke-width="2"/></svg>
<div class="a" style="left:1137.6px;top:516.2px;width:2117.1px;height:53.1px;background:#f8f8f8;"></div>
<div class="a" style="left:1148.0px;top:527.6px;width:30.9px;height:31.0px;background:#b85b57;border:1px solid #a84e4a;"></div>
<svg class="a" style="left:1153.5px;top:533.1px" width="20" height="20" viewBox="0 0 20 20"><rect x="5.2" y="5.6" width="9.8" height="9.6" rx="1" fill="none" stroke="#fbeeee" stroke-width="1.5"/><rect x="3.5" y="3.6" width="13" height="1.8" fill="#fbeeee"/><path d="M8.1 3.8 L8.1 1.6 L12 1.6 L12 3.8" stroke="#fbeeee" stroke-width="1.3" fill="none"/><path d="M8.6 7.6 L8.6 13.4 M11.6 7.6 L11.6 13.4" stroke="#fbeeee" stroke-width="1.1"/></svg>
<div class="a" style="left:1186.2px;top:527.6px;width:778.2px;height:31.0px;background:#fff;border:1px solid #cccccc;box-shadow:inset 0 1px 2px rgba(0,0,0,.08);"></div>
<div class="t" style="left:1191.45px;top:535px;font-size:15.60px;color:#555;">Tilslutning til El</div>
<div class="a" style="left:1987.5px;top:527.6px;width:257.7px;height:31.0px;background:#fff;border:1px solid #cccccc;box-shadow:inset 0 1px 2px rgba(0,0,0,.08);"></div>
<div class="t" style="left:1991.42px;top:535px;font-size:15.60px;color:#555;">25-04-2022 14:00</div>
<div class="a" style="left:2267.1px;top:527.6px;width:257.7px;height:31.0px;background:#fff;border:1px solid #cccccc;box-shadow:inset 0 1px 2px rgba(0,0,0,.08);"></div>
<div class="t" style="left:2271.02px;top:535px;font-size:15.60px;color:#555;">26-04-2022 11:58</div>
<div class="a" style="left:2547.0px;top:527.6px;width:118.1px;height:31.0px;background:#eeeeee;border:1px solid #cccccc;box-shadow:inset 0 1px 2px rgba(0,0,0,.08);"></div>
<div class="t" style="left:2550.71px;top:535px;font-size:15.60px;color:#555;">1</div>
<div class="a" style="left:2686.7px;top:527.6px;width:118.0px;height:31.0px;background:#fff;border:1px solid #cccccc;box-shadow:inset 0 1px 2px rgba(0,0,0,.08);"></div>
<div class="t" style="left:2690.41px;top:535px;font-size:15.60px;color:#555;">1</div>
<div class="a" style="left:2826.6px;top:527.6px;width:145.4px;height:31.0px;background:#fff;border:1px solid #cccccc;box-shadow:inset 0 1px 2px rgba(0,0,0,.08);"></div>
<div class="t" style="left:2831.79px;top:535px;font-size:15.60px;color:#555;">0,00</div>
<div class="a" style="left:2994.0px;top:527.6px;width:145.4px;height:31.0px;background:#fff;border:1px solid #cccccc;box-shadow:inset 0 1px 2px rgba(0,0,0,.08);"></div>
<div class="t" style="left:2998.79px;top:535px;font-size:15.60px;color:#555;">0,00</div>
<div class="a" style="left:3181.8px;top:527.6px;width:62.5px;height:31.0px;background:#fff;border:1px solid #cccccc;"></div>
<svg class="a" style="left:3204.0px;top:534.6px" width="17" height="15" viewBox="0 0 17 15"><rect x="1" y="7" width="9.5" height="7" rx="1" fill="#222"/><path d="M8.5 7.5 L8.5 4.5 Q8.5 1.5 12 1.5 Q15 1.5 15 4.5 L15 6" fill="none" stroke="#222" stroke-width="2"/></svg>
<div class="a" style="left:1137.0px;top:626.0px;width:2117.6px;height:2.0px;background:#dddddd;"></div>
<div class="t" style="left:1137.55px;top:647px;font-size:20.50px;color:#161616;-webkit-text-stroke:0.4px #161616;transform:scaleX(1.0818);transform-origin:0 0;">Ikke faktureret</div>
<div class="t" style="left:1342.62px;top:647px;font-size:20.50px;color:#b85450;transform:scaleX(0.9480);transform-origin:0 0;">195,00 DKK</div>
<div class="t" style="left:1137.80px;top:676px;font-size:20.50px;color:#161616;-webkit-text-stroke:0.4px #161616;transform:scaleX(1.0689);transform-origin:0 0;">Faktureret</div>
<div class="t" style="left:1364.34px;top:676px;font-size:20.50px;color:#4f8a5f;transform:scaleX(0.9468);transform-origin:0 0;">0,00 DKK</div>
<div class="t" style="left:1139.13px;top:704px;font-size:20.50px;color:#161616;-webkit-text-stroke:0.4px #161616;transform:scaleX(1.0285);transform-origin:0 0;">Total – for booking</div>
<div class="t" style="left:1342.62px;top:704px;font-size:20.50px;color:#111;transform:scaleX(0.9480);transform-origin:0 0;">195,00 DKK</div>
<div class="t" style="left:2830.43px;top:647px;font-size:20.50px;color:#161616;-webkit-text-stroke:0.4px #161616;transform:scaleX(1.0538);transform-origin:0 0;">Manglende betaling</div>
<div class="t" style="left:3053.21px;top:647px;font-size:20.50px;color:#b85450;transform:scaleX(0.9556);transform-origin:0 0;">26,53 €</div>
<div class="t" style="left:3148.42px;top:647px;font-size:20.50px;color:#b85450;transform:scaleX(0.9489);transform-origin:0 0;">195,00 DKK</div>
<div class="t" style="left:2830.43px;top:676px;font-size:20.50px;color:#161616;-webkit-text-stroke:0.4px #161616;transform:scaleX(1.0504);transform-origin:0 0;">Modtaget Betalinger</div>
<div class="t" style="left:3064.24px;top:676px;font-size:20.50px;color:#4f8a5f;transform:scaleX(0.9534);transform-origin:0 0;">0,00 €</div>
<div class="t" style="left:3171.05px;top:676px;font-size:20.50px;color:#4f8a5f;transform:scaleX(0.9376);transform-origin:0 0;">0,00 DKK</div>
<div class="t" style="left:2831.73px;top:704px;font-size:20.50px;color:#161616;-webkit-text-stroke:0.4px #161616;transform:scaleX(1.0291);transform-origin:0 0;">Total – for booking</div>
<div class="t" style="left:3053.21px;top:704px;font-size:20.50px;color:#111;transform:scaleX(0.9556);transform-origin:0 0;">26,53 €</div>
<div class="t" style="left:3148.42px;top:704px;font-size:20.50px;color:#111;transform:scaleX(0.9489);transform-origin:0 0;">195,00 DKK</div>
<svg class="a" style="left:2807.20px;top:630.20px" width="459.40" height="112.80" fill="#cc0000"><rect x="0.00" y="0.00" width="12.00" height="8.00"/><rect x="0.00" y="0.00" width="8.00" height="12.00"/><rect x="447.40" y="0.00" width="12.00" height="8.00"/><rect x="451.40" y="0.00" width="8.00" height="12.00"/><rect x="0.00" y="104.80" width="12.00" height="8.00"/><rect x="0.00" y="100.80" width="8.00" height="12.00"/><rect x="447.40" y="104.80" width="12.00" height="8.00"/><rect x="451.40" y="100.80" width="8.00" height="12.00"/><rect x="19.84" y="0.00" width="8.00" height="8.00"/><rect x="19.84" y="104.80" width="8.00" height="8.00"/><rect x="35.67" y="0.00" width="8.00" height="8.00"/><rect x="35.67" y="104.80" width="8.00" height="8.00"/><rect x="51.51" y="0.00" width="8.00" height="8.00"/><rect x="51.51" y="104.80" width="8.00" height="8.00"/><rect x="67.34" y="0.00" width="8.00" height="8.00"/><rect x="67.34" y="104.80" width="8.00" height="8.00"/><rect x="83.18" y="0.00" width="8.00" height="8.00"/><rect x="83.18" y="104.80" width="8.00" height="8.00"/><rect x="99.01" y="0.00" width="8.00" height="8.00"/><rect x="99.01" y="104.80" width="8.00" height="8.00"/><rect x="114.85" y="0.00" width="8.00" height="8.00"/><rect x="114.85" y="104.80" width="8.00" height="8.00"/><rect x="130.69" y="0.00" width="8.00" height="8.00"/><rect x="130.69" y="104.80" width="8.00" height="8.00"/><rect x="146.52" y="0.00" width="8.00" height="8.00"/><rect x="146.52" y="104.80" width="8.00" height="8.00"/><rect x="162.36" y="0.00" width="8.00" height="8.00"/><rect x="162.36" y="104.80" width="8.00" height="8.00"/><rect x="178.19" y="0.00" width="8.00" height="8.00"/><rect x="178.19" y="104.80" width="8.00" height="8.00"/><rect x="194.03" y="0.00" width="8.00" height="8.00"/><rect x="194.03" y="104.80" width="8.00" height="8.00"/><rect x="209.86" y="0.00" width="8.00" height="8.00"/><rect x="209.86" y="104.80" width="8.00" height="8.00"/><rect x="225.70" y="0.00" width="8.00" height="8.00"/><rect x="225.70" y="104.80" width="8.00" height="8.00"/><rect x="241.54" y="0.00" width="8.00" height="8.00"/><rect x="241.54" y="104.80" width="8.00" height="8.00"/><rect x="257.37" y="0.00" width="8.00" height="8.00"/><rect x="257.37" y="104.80" width="8.00" height="8.00"/><rect x="273.21" y="0.00" width="8.00" height="8.00"/><rect x="273.21" y="104.80" width="8.00" height="8.00"/><rect x="289.04" y="0.00" width="8.00" height="8.00"/><rect x="289.04" y="104.80" width="8.00" height="8.00"/><rect x="304.88" y="0.00" width="8.00" height="8.00"/><rect x="304.88" y="104.80" width="8.00" height="8.00"/><rect x="320.71" y="0.00" width="8.00" height="8.00"/><rect x="320.71" y="104.80" width="8.00" height="8.00"/><rect x="336.55" y="0.00" width="8.00" height="8.00"/><rect x="336.55" y="104.80" width="8.00" height="8.00"/><rect x="352.39" y="0.00" width="8.00" height="8.00"/><rect x="352.39" y="104.80" width="8.00" height="8.00"/><rect x="368.22" y="0.00" width="8.00" height="8.00"/><rect x="368.22" y="104.80" width="8.00" height="8.00"/><rect x="384.06" y="0.00" width="8.00" height="8.00"/><rect x="384.06" y="104.80" width="8.00" height="8.00"/><rect x="399.89" y="0.00" width="8.00" height="8.00"/><rect x="399.89" y="104.80" width="8.00" height="8.00"/><rect x="415.73" y="0.00" width="8.00" height="8.00"/><rect x="415.73" y="104.80" width="8.00" height="8.00"/><rect x="431.56" y="0.00" width="8.00" height="8.00"/><rect x="431.56" y="104.80" width="8.00" height="8.00"/><rect x="0.00" y="20.13" width="8.00" height="8.00"/><rect x="451.40" y="20.13" width="8.00" height="8.00"/><rect x="0.00" y="36.27" width="8.00" height="8.00"/><rect x="451.40" y="36.27" width="8.00" height="8.00"/><rect x="0.00" y="52.40" width="8.00" height="8.00"/><rect x="451.40" y="52.40" width="8.00" height="8.00"/><rect x="0.00" y="68.53" width="8.00" height="8.00"/><rect x="451.40" y="68.53" width="8.00" height="8.00"/><rect x="0.00" y="84.67" width="8.00" height="8.00"/><rect x="451.40" y="84.67" width="8.00" height="8.00"/></svg>
<div class="a" style="left:1117.0px;top:775.0px;width:2158.2px;height:144.5px;background:#fff;border:1px solid #dcdcdc;box-shadow:0 1px 2px rgba(0,0,0,.08);"></div>
<div class="a" style="left:1117.0px;top:775.0px;width:2158.2px;height:58.8px;background:#f4f4f4;border:1px solid #dcdcdc;"></div>
<div class="a" style="left:1137.4px;top:782.5px;width:62.4px;height:44.0px;background:#fff;border:1px solid #cccccc;"></div>
<svg class="a" style="left:1154.0px;top:793.5px" width="29" height="19" viewBox="0 0 29 19"><rect x="0.75" y="0.75" width="27.5" height="17.5" fill="#fff" stroke="#222" stroke-width="1.5"/><path d="M0 0 L5.5 0 A5.5 5.5 0 0 1 0 5.5 Z M29 0 L23.5 0 A5.5 5.5 0 0 0 29 5.5 Z M0 19 L5.5 19 A5.5 5.5 0 0 0 0 13.5 Z M29 19 L23.5 19 A5.5 5.5 0 0 1 29 13.5 Z" fill="#222"/><ellipse cx="14.2" cy="9.2" rx="4.6" ry="5.8" fill="none" stroke="#222" stroke-width="1.3"/><path d="M12.6 7 L14.8 5.6 L14.8 12.9 M12.9 12.9 L16.6 12.9" stroke="#222" stroke-width="1.5" fill="none"/></svg>
<div class="t" style="left:1212.42px;top:793px;font-size:23.00px;color:#484848;transform:scaleX(0.9428);transform-origin:0 0;">Betaling &amp; Faktura</div>
<div class="a" style="left:2055.0px;top:789.1px;width:102.8px;height:30.8px;background:#d9c44b;border:1px solid #cdb535;"></div>
<svg class="a" style="left:2061.5px;top:796.5px" width="16" height="14" viewBox="0 0 16 14"><rect x="3.5" y="0.8" width="8" height="3.6" fill="none" stroke="#fff" stroke-width="1.3"/><rect x="0.5" y="4.3" width="15" height="5.8" rx="1.2" fill="#fff"/><rect x="3.5" y="8" width="8" height="4.6" fill="#d9c44b" stroke="#fff" stroke-width="1.3"/></svg>
<div class="t" style="left:2080.33px;top:795px;font-size:15.50px;color:#fff;transform:scaleX(1.0741);transform-origin:0 0;">Proforma</div>
<div class="a" style="left:2165.3px;top:790.9px;width:521.7px;height:30.5px;background:#fff;border:1px solid #cccccc;box-shadow:inset 0 1px 2px rgba(0,0,0,.08);"></div>
<div class="t" style="left:2176.32px;top:798px;font-size:16.50px;color:#606060;transform:scaleX(1.0229);transform-origin:0 0;">Bookingskabeloner</div>
<svg class="a" style="left:2663.5px;top:802.0px" width="12" height="8" viewBox="0 0 12 8"><path d="M1 1 L11 1 L6 7 Z" fill="#777"/></svg>
<div class="a" style="left:2694.8px;top:790.9px;width:521.1px;height:30.5px;background:#fff;border:1px solid #cccccc;box-shadow:inset 0 1px 2px rgba(0,0,0,.08);"></div>
<div class="t" style="left:2705.32px;top:798px;font-size:16.50px;color:#606060;transform:scaleX(1.0172);transform-origin:0 0;">Betalingsskabeloner</div>
<svg class="a" style="left:3192.8px;top:802.0px" width="12" height="8" viewBox="0 0 12 8"><path d="M1 1 L11 1 L6 7 Z" fill="#777"/></svg>
<div class="a" style="left:3224.3px;top:790.8px;width:29.9px;height:30.6px;background:#fff;border:1px solid #cccccc;"></div>
<svg class="a" style="left:3231.3px;top:798.9px" width="16" height="14" viewBox="0 0 16 14"><path d="M2.3 10.2 L8 4.7 L13.7 10.2" fill="none" stroke="#1c212b" stroke-width="2.8" stroke-linecap="butt" stroke-linejoin="miter"/></svg>
<div class="a" style="left:1137.4px;top:854.4px;width:522.2px;height:30.5px;background:#fff;border:1px solid #cccccc;box-shadow:inset 0 1px 2px rgba(0,0,0,.08);"></div>
<div class="t" style="left:1148.39px;top:862px;font-size:16.50px;color:#6a6a6a;transform:scaleX(1.0396);transform-origin:0 0;">Kontant</div>
<svg class="a" style="left:1636.0px;top:865.5px" width="12" height="8" viewBox="0 0 12 8"><path d="M1 1 L11 1 L6 7 Z" fill="#777"/></svg>
<div class="a" style="left:1667.1px;top:854.4px;width:169.2px;height:30.5px;background:#fff;border:1px solid #cccccc;box-shadow:inset 0 1px 2px rgba(0,0,0,.08);"></div>
<div class="t" style="left:1671.52px;top:863px;font-size:15.60px;color:#555;">25-04-2022</div>
<div class="a" style="left:1843.8px;top:854.4px;width:875.2px;height:30.5px;background:#fff;border:1px solid #cccccc;box-shadow:inset 0 1px 2px rgba(0,0,0,.08);"></div>
<div class="t" style="left:1848.32px;top:863px;font-size:15.60px;color:#777;">Kommentar</div>
<div class="a" style="left:2726.3px;top:854.4px;width:312.5px;height:30.5px;background:#fff;border:1px solid #cccccc;box-shadow:inset 0 1px 2px rgba(0,0,0,.08);"></div>
<div class="t" style="left:2983.65px;top:863px;font-size:15.60px;color:#555;">0,00</div>
<div class="a" style="left:3038.3px;top:854.4px;width:166.1px;height:30.5px;background:#fff;border:1px solid #cccccc;box-shadow:inset 0 1px 2px rgba(0,0,0,.08);"></div>
<div class="t" style="left:3049.45px;top:862px;font-size:16.50px;color:#707070;transform:scaleX(0.9263);transform-origin:0 0;">DKK</div>
<svg class="a" style="left:3181.4px;top:865.5px" width="12" height="8" viewBox="0 0 12 8"><path d="M1 1 L11 1 L6 7 Z" fill="#777"/></svg>
<div class="a" style="left:3203.9px;top:854.4px;width:41.3px;height:30.5px;background:#fff;border:1px solid #cccccc;"></div>
<svg class="a" style="left:3215.5px;top:862.5px" width="19" height="13" viewBox="0 0 19 13"><rect x="0.6" y="0.6" width="17.8" height="11.6" fill="#fff" stroke="#222" stroke-width="1.2"/><path d="M0 0 L3.8 0 A3.8 3.8 0 0 1 0 3.8 Z M19 0 L15.2 0 A3.8 3.8 0 0 0 19 3.8 Z M0 12.8 L3.8 12.8 A3.8 3.8 0 0 0 0 9 Z M19 12.8 L15.2 12.8 A3.8 3.8 0 0 1 19 9 Z" fill="#222"/><ellipse cx="9.5" cy="6.4" rx="2.8" ry="3.8" fill="none" stroke="#222" stroke-width="1"/><path d="M9.6 4.4 L9.6 8.6" stroke="#222" stroke-width="1.1"/></svg>
<div class="a" style="left:2600.3px;top:922.8px;width:674.8px;height:59.4px;background:#fff;border:1px solid #dcdcdc;"></div>
<div class="a" style="left:2608.4px;top:929.8px;width:175.7px;height:44.9px;background:#2272b9;"></div>
<div class="t" style="left:2646.54px;top:944px;font-size:18.30px;color:#fff;">Gen beregn*</div>
<div class="a" style="left:2797.6px;top:929.8px;width:176.1px;height:44.9px;background:#2272b9;"></div>
<div class="t" style="left:2834.04px;top:944px;font-size:18.30px;color:#fff;">Total Faktura</div>
<div class="a" style="left:2987.1px;top:929.8px;width:166.8px;height:44.9px;background:#2272b9;"></div>
<div class="t" style="left:3024.96px;top:944px;font-size:18.30px;color:#fff;">Del Faktura</div>
<div class="a" style="left:3167.4px;top:929.8px;width:100.3px;height:44.9px;background:#2272b9;"></div>
<div class="t" style="left:3204.53px;top:944px;font-size:18.30px;color:#fff;">Luk</div>
<div class="a" style="left:3284.0px;top:0.0px;width:2.0px;height:993.0px;background:#000000;"></div>
</body></html>
